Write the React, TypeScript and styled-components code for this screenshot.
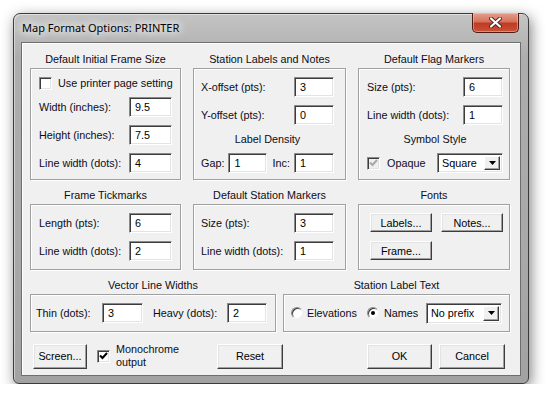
import React from "react";
import styled, { createGlobalStyle } from "styled-components";

// Classic Win7-basic dialog: "Map Format Options"

const GlobalStyle = createGlobalStyle`
  html, body {
    margin: 0;
    padding: 0;
    background: #ffffff;
  }
  body {
    font-family: "Liberation Sans", Arial, sans-serif;
    font-size: 10.8px;
    color: #0c0c18;
  }
`;

const Page = styled.div`
  padding: 13px 0 0 13px;
`;

const Window = styled.div`
  box-sizing: border-box;
  width: 516px;
  height: 371px;
  display: flex;
  flex-direction: column;
  padding: 0 7px 7px 7px;
  border: 1px solid #3b3b3b;
  border-radius: 7px 7px 6px 6px;
  background: linear-gradient(180deg, #c4c4c4 0%, #adadad 12%, #a9a9a9 60%, #a2a2a2 100%);
  box-shadow: 2px 4px 14px rgba(0, 0, 0, 0.5), inset 1px 1px 0 rgba(255, 255, 255, 0.45);
`;

const TitleBar = styled.div`
  height: 28px;
  display: flex;
  justify-content: space-between;
  align-items: flex-start;
`;

const TitleText = styled.div`
  height: 28px;
  line-height: 27px;
  padding-left: 1px;
  font-family: "Noto Sans", "Liberation Sans", sans-serif;
  font-size: 11px;
  color: #000;
  text-shadow: 0 0 8px #fff, 0 0 10px #fff, 0 0 14px rgba(255, 255, 255, 0.8);
`;

const CloseButton = styled.div`
  box-sizing: border-box;
  width: 47px;
  height: 20px;
  margin-top: -1px;
  margin-right: 2px;
  display: flex;
  align-items: center;
  justify-content: center;
  border: 1px solid #4e1a12;
  border-top: none;
  border-radius: 0 0 5px 5px;
  background: linear-gradient(180deg, #e6a08e 0%, #d6735c 45%, #c13b22 55%, #c8523a 100%);
  box-shadow: inset 0 0 0 1px rgba(255, 210, 200, 0.45);
`;

const Client = styled.div`
  flex: 1;
  display: flex;
  flex-direction: column;
  gap: 8px;
  padding: 9px 10px 5px 8px;
  border: 1px solid #6e6e6e;
  background: #f0f0f0;
  box-shadow: inset 1px 1px 0 #ffffff;
`;

const Grid3 = styled.div`
  display: grid;
  grid-template-columns: 151px 153px 152px;
  column-gap: 12px;
`;

const Grid2 = styled.div`
  display: grid;
  grid-template-columns: 246px 227px;
  column-gap: 7px;
`;

const Group = styled.div`
  display: flex;
  flex-direction: column;
`;

const GroupTitle = styled.div`
  height: 14px;
  line-height: 14px;
  margin-bottom: 2px;
  text-align: center;
  white-space: nowrap;
`;

const GroupBox = styled.div<{ $pad: string }>`
  flex: 1;
  display: flex;
  flex-direction: column;
  gap: 8px;
  padding: ${({ $pad }) => $pad};
  border: 1px solid #a0a0a0;
  box-shadow: inset 1px 1px 0 #ffffff, 1px 1px 0 #ffffff;
`;

const FieldRow = styled.div`
  height: 20px;
  display: flex;
  align-items: center;
  justify-content: space-between;
  white-space: nowrap;
`;

const InlineRow = styled.div<{ $gap?: number }>`
  height: 20px;
  display: flex;
  align-items: center;
  gap: ${({ $gap }) => $gap ?? 4}px;
  white-space: nowrap;
`;

const CheckRow = styled.label`
  height: 12px;
  display: flex;
  align-items: center;
  gap: 6px;
  white-space: nowrap;
`;

const SubTitle = styled.div`
  height: 12px;
  line-height: 12px;
  text-align: center;
`;

const Caption = styled.span<{ $w: number; $ml?: number }>`
  width: ${({ $w }) => $w}px;
  margin-left: ${({ $ml }) => $ml ?? 0}px;
`;

const Input = styled.div<{ $w: number }>`
  box-sizing: border-box;
  width: ${({ $w }) => $w}px;
  height: 20px;
  padding: 2px 0 0 5px;
  line-height: 14px;
  background: #ffffff;
  border: 1px solid;
  border-color: #8a8a8a #ffffff #ffffff #8a8a8a;
  box-shadow: inset 1px 1px 0 #3c3c3c, inset -1px -1px 0 #e3e3e3;
  color: #000;
`;

const Select = styled.div<{ $w: number; $h: number }>`
  box-sizing: border-box;
  width: ${({ $w }) => $w}px;
  height: ${({ $h }) => $h}px;
  display: flex;
  align-items: stretch;
  padding: 2px;
  background: #ffffff;
  border: 1px solid;
  border-color: #8a8a8a #ffffff #ffffff #8a8a8a;
  box-shadow: inset 1px 1px 0 #3c3c3c, inset -1px -1px 0 #e3e3e3;
`;

const SelectText = styled.div`
  flex: 1;
  padding-left: 2px;
  display: flex;
  align-items: center;
  color: #000;
`;

const SelectArrow = styled.div`
  box-sizing: border-box;
  width: 16px;
  display: flex;
  align-items: center;
  justify-content: center;
  background: #f0f0f0;
  border: 1px solid;
  border-color: #ffffff #3c3c3c #3c3c3c #ffffff;
  box-shadow: inset -1px -1px 0 #a0a0a0;
`;

const Box = styled.span<{ $disabled?: boolean }>`
  box-sizing: border-box;
  width: 13px;
  height: 13px;
  flex: none;
  display: flex;
  align-items: center;
  justify-content: center;
  background: ${({ $disabled }) => ($disabled ? "#f0f0f0" : "#ffffff")};
  border: 1px solid;
  border-color: #8a8a8a #ffffff #ffffff #8a8a8a;
  box-shadow: inset 1px 1px 0 #3c3c3c, inset -1px -1px 0 #e3e3e3;
`;

const Radio = styled.span<{ $on?: boolean }>`
  box-sizing: border-box;
  width: 12px;
  height: 12px;
  flex: none;
  border-radius: 50%;
  background: #ffffff;
  border: 1px solid;
  border-color: #8a8a8a #f2f2f2 #f2f2f2 #8a8a8a;
  box-shadow: inset 1px 1px 0 #3c3c3c;
  display: flex;
  align-items: center;
  justify-content: center;

  &::after {
    content: "";
    width: 4px;
    height: 4px;
    border-radius: 50%;
    background: ${({ $on }) => ($on ? "#000" : "transparent")};
  }
`;

const Button = styled.div<{ $w: number; $h: number }>`
  box-sizing: border-box;
  width: ${({ $w }) => $w}px;
  height: ${({ $h }) => $h}px;
  flex: none;
  display: flex;
  align-items: center;
  justify-content: center;
  background: #f0f0f0;
  border: 1px solid;
  border-color: #ffffff #3c3c3c #3c3c3c #ffffff;
  box-shadow: inset -1px -1px 0 #a0a0a0, inset 1px 1px 0 #e3e3e3;
  color: #000;
  white-space: nowrap;
`;

const FontsGrid = styled.div`
  display: grid;
  grid-template-columns: 62px 62px;
  gap: 9px;
`;

const BottomBar = styled.div`
  margin-top: 3px;
  display: flex;
  align-items: center;
  padding: 0 5px 0 3px;
`;

const MonoCheck = styled.label`
  display: flex;
  align-items: center;
  gap: 6px;
  margin-left: 10px;
  width: 120px;
  line-height: 13px;
`;

const Spacer = styled.div`
  flex: 1;
`;

const ButtonPair = styled.div`
  display: flex;
  gap: 7px;
`;

const CheckMark = ({ color }: { color: string }) => (
  <svg width="9" height="8" viewBox="0 0 9 8">
    <path d="M1 3.5 L3.5 6 L8 1" fill="none" stroke={color} strokeWidth="2" />
  </svg>
);

const Triangle = () => (
  <svg width="7" height="4" viewBox="0 0 7 4">
    <path d="M0 0 H7 L3.5 4 Z" fill="#000" />
  </svg>
);

export default function App() {
  return (
    <Page>
      <GlobalStyle />
      <Window>
        <TitleBar>
          <TitleText>Map Format Options: PRINTER</TitleText>
          <CloseButton>
            <svg width="13" height="11" viewBox="0 0 13 11">
              <path d="M2 1.5 L11 9.5 M11 1.5 L2 9.5" stroke="#4a2a24" strokeWidth="4" strokeLinecap="round" />
              <path d="M2 1.5 L11 9.5 M11 1.5 L2 9.5" stroke="#ffffff" strokeWidth="2.2" strokeLinecap="round" />
            </svg>
          </CloseButton>
        </TitleBar>

        <Client>
          <Grid3>
            <Group>
              <GroupTitle>Default Initial Frame Size</GroupTitle>
              <GroupBox $pad="8px 8px 6px 8px">
                <CheckRow>
                  <Box />
                  Use printer page setting
                </CheckRow>
                <FieldRow>
                  Width (inches):
                  <Input $w={43}>9.5</Input>
                </FieldRow>
                <FieldRow>
                  Height (inches):
                  <Input $w={43}>7.5</Input>
                </FieldRow>
                <FieldRow>
                  Line width (dots):
                  <Input $w={43}>4</Input>
                </FieldRow>
              </GroupBox>
            </Group>

            <Group>
              <GroupTitle>Station Labels and Notes</GroupTitle>
              <GroupBox $pad="8px 11px 6px 7px">
                <FieldRow>
                  X-offset (pts):
                  <Input $w={40}>3</Input>
                </FieldRow>
                <FieldRow>
                  Y-offset (pts):
                  <Input $w={40}>0</Input>
                </FieldRow>
                <SubTitle>Label Density</SubTitle>
                <FieldRow>
                  <InlineRow>
                    Gap:
                    <Input $w={39}>1</Input>
                  </InlineRow>
                  <InlineRow>
                    Inc:
                    <Input $w={40}>1</Input>
                  </InlineRow>
                </FieldRow>
              </GroupBox>
            </Group>

            <Group>
              <GroupTitle>Default Flag Markers</GroupTitle>
              <GroupBox $pad="8px 6px 6px 8px">
                <FieldRow>
                  Size (pts):
                  <Input $w={40}>6</Input>
                </FieldRow>
                <FieldRow>
                  Line width (dots):
                  <Input $w={40}>1</Input>
                </FieldRow>
                <SubTitle>Symbol Style</SubTitle>
                <FieldRow>
                  <InlineRow $gap={7}>
                    <Box $disabled>
                      <CheckMark color="#a8a8a8" />
                    </Box>
                    Opaque
                  </InlineRow>
                  <Select $w={66} $h={20}>
                    <SelectText>Square</SelectText>
                    <SelectArrow>
                      <Triangle />
                    </SelectArrow>
                  </Select>
                </FieldRow>
              </GroupBox>
            </Group>
          </Grid3>

          <Grid3>
            <Group>
              <GroupTitle>Frame Tickmarks</GroupTitle>
              <GroupBox $pad="8px 8px 8px 8px">
                <FieldRow>
                  Length (pts):
                  <Input $w={43}>6</Input>
                </FieldRow>
                <FieldRow>
                  Line width (dots):
                  <Input $w={43}>2</Input>
                </FieldRow>
              </GroupBox>
            </Group>

            <Group>
              <GroupTitle>Default Station Markers</GroupTitle>
              <GroupBox $pad="8px 11px 8px 7px">
                <FieldRow>
                  Size (pts):
                  <Input $w={40}>3</Input>
                </FieldRow>
                <FieldRow>
                  Line width (dots):
                  <Input $w={40}>1</Input>
                </FieldRow>
              </GroupBox>
            </Group>

            <Group>
              <GroupTitle>Fonts</GroupTitle>
              <GroupBox $pad="8px 6px 8px 11px">
                <FontsGrid>
                  <Button $w={62} $h={19}>Labels...</Button>
                  <Button $w={62} $h={19}>Notes...</Button>
                  <Button $w={62} $h={19}>Frame...</Button>
                </FontsGrid>
              </GroupBox>
            </Group>
          </Grid3>

          <Grid2>
            <Group>
              <GroupTitle>Vector Line Widths</GroupTitle>
              <GroupBox $pad="8px 8px 8px 5px">
                <InlineRow $gap={0}>
                  <Caption $w={66}>Thin (dots):</Caption>
                  <Input $w={41}>3</Input>
                  <Caption $w={74} $ml={10}>Heavy (dots):</Caption>
                  <Input $w={40}>2</Input>
                </InlineRow>
              </GroupBox>
            </Group>

            <Group>
              <GroupTitle>Station Label Text</GroupTitle>
              <GroupBox $pad="8px 7px 8px 7px">
                <InlineRow $gap={0}>
                  <Radio />
                  <Caption $w={60} $ml={4}>Elevations</Caption>
                  <Radio $on />
                  <Caption $w={42} $ml={5}>Names</Caption>
                  <Select $w={76} $h={21}>
                    <SelectText>No prefix</SelectText>
                    <SelectArrow>
                      <Triangle />
                    </SelectArrow>
                  </Select>
                </InlineRow>
              </GroupBox>
            </Group>
          </Grid2>

          <BottomBar>
            <Button $w={54} $h={25}>Screen...</Button>
            <MonoCheck>
              <Box>
                <CheckMark color="#000" />
              </Box>
              <span>
                Monochrome
                <br />
                output
              </span>
            </MonoCheck>
            <Button $w={66} $h={25}>Reset</Button>
            <Spacer />
            <ButtonPair>
              <Button $w={65} $h={25}>OK</Button>
              <Button $w={66} $h={25}>Cancel</Button>
            </ButtonPair>
          </BottomBar>
        </Client>
      </Window>
    </Page>
  );
}
